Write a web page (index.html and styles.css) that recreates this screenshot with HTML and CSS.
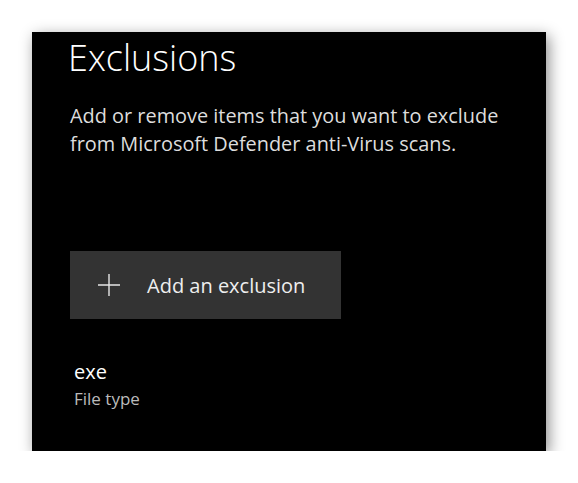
FILE: index.html
```html
<!DOCTYPE html>
<html>
<head>
    <title>Exclusions</title>
    <meta name="viewport" content="width=device-width, initial-scale=1.0">
    <link rel="stylesheet" href="styles.css">
</head>
<body>
    <div class="panel">
        <h1 class="title">Exclusions</h1>
        <p class="desc">Add or remove items that you want to exclude from Microsoft Defender anti-Virus scans.</p>

        <button class="add-button">
            <svg class="plus" width="22" height="22" viewBox="0 0 22 22">
                <path d="M11 0 V22 M0 11 H22" stroke="#e6e6e6" stroke-width="1.4" fill="none"/>
            </svg>
            <span>Add an exclusion</span>
        </button>

        <div class="item">
            <div class="item-name">exe</div>
            <div class="item-type">File type</div>
        </div>
    </div>
</body>
</html>
```

FILE: styles.css
```css
body {
    margin: 0;
    background: #fff;
    font-family: "Open Sans", "Noto Sans", sans-serif;
}
.panel {
    margin: 32px 0 0 32px;
    width: 514px;
    height: 419px;
    box-sizing: border-box;
    padding: 0 0 0 38px;
    background: #000;
    color: #fff;
    box-shadow: 3px 4px 14px rgba(0, 0, 0, 0.45);
}
.title {
    margin: 0;
    padding-top: 2px;
    font-size: 36px;
    font-weight: 300;
    line-height: 48px;
    margin-left: -2px;
}
.desc {
    margin: 20px 0 0 0;
    width: 440px;
    font-size: 19.9px;
    line-height: 28px;
    color: #ddd;
}
.add-button {
    display: flex;
    align-items: center;
    margin-top: 93px;
    width: 271px;
    height: 68px;
    padding: 0 0 0 28px;
    background: #333;
    border: none;
    color: #eee;
    font-family: inherit;
    font-size: 20px;
    cursor: pointer;
}
.add-button .plus {
    margin-right: 27px;
}
.item {
    margin-top: 40px;
    padding-left: 4px;
}
.item-name {
    font-size: 20px;
    line-height: 26px;
    color: #fff;
}
.item-type {
    margin-top: 2px;
    font-size: 17px;
    line-height: 24px;
    color: #bbb;
}
```
